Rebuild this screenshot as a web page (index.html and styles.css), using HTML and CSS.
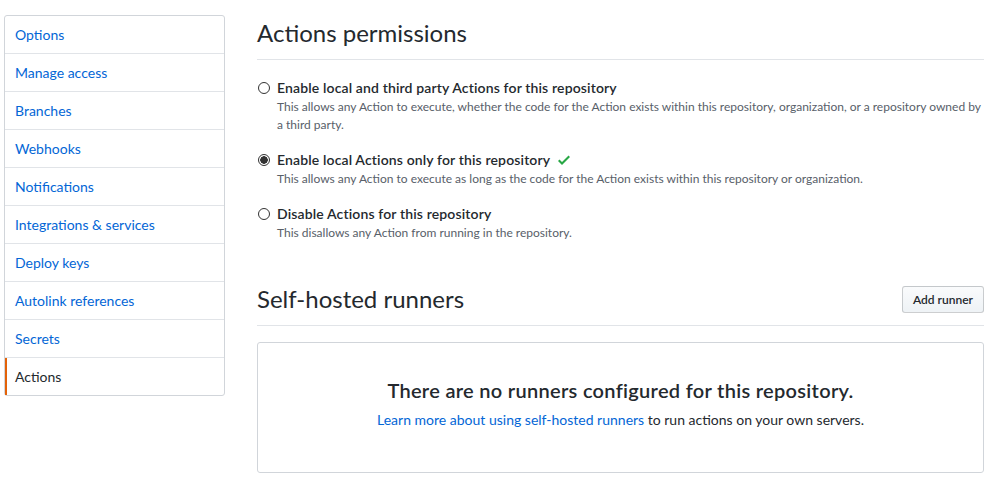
FILE: index.html
```html
<!DOCTYPE html>
<html lang="en">
<head>
  <meta charset="UTF-8">
  <title>Actions settings</title>
  <link rel="stylesheet" href="styles.css">
</head>
<body>
  <div class="layout">
    <nav class="menu">
      <a class="menu-item" href="#">Options</a>
      <a class="menu-item" href="#">Manage access</a>
      <a class="menu-item" href="#">Branches</a>
      <a class="menu-item" href="#">Webhooks</a>
      <a class="menu-item" href="#">Notifications</a>
      <a class="menu-item" href="#">Integrations &amp; services</a>
      <a class="menu-item" href="#">Deploy keys</a>
      <a class="menu-item" href="#">Autolink references</a>
      <a class="menu-item" href="#">Secrets</a>
      <a class="menu-item selected" href="#">Actions</a>
    </nav>

    <main class="content">
      <div class="subhead">
        <h2 class="subhead-heading">Actions permissions</h2>
      </div>

      <form class="permissions">
        <div class="form-checkbox">
          <label>
            <input type="radio" name="perm">
            Enable local and third party Actions for this repository
          </label>
          <p class="note">This allows any Action to execute, whether the code for the Action exists within this repository, organization, or a repository owned by a third party.</p>
        </div>
        <div class="form-checkbox">
          <label>
            <input type="radio" name="perm" checked>
            Enable local Actions only for this repository
            <svg class="check" width="12" height="16" viewBox="0 0 12 16"><path fill-rule="evenodd" d="M12 5l-8 8-4-4 1.5-1.5L4 10l6.5-6.5L12 5z"></path></svg>
          </label>
          <p class="note">This allows any Action to execute as long as the code for the Action exists within this repository or organization.</p>
        </div>
        <div class="form-checkbox">
          <label>
            <input type="radio" name="perm">
            Disable Actions for this repository
          </label>
          <p class="note">This disallows any Action from running in the repository.</p>
        </div>
      </form>

      <div class="subhead spacious">
        <h2 class="subhead-heading">Self-hosted runners</h2>
        <button class="btn" type="button">Add runner</button>
      </div>

      <div class="blankslate">
        <h3>There are no runners configured for this repository.</h3>
        <p><a href="#">Learn more about using self-hosted runners</a> to run actions on your own servers.</p>
      </div>
    </main>
  </div>
</body>
</html>
```

FILE: styles.css
```css
body {
  margin: 0;
  font-family: Lato, "Noto Sans", Arial, sans-serif;
  font-size: 14px;
  line-height: 1.5;
  color: #24292e;
  background-color: #fff;
}
a {
  color: #0366d6;
  text-decoration: none;
}
.layout {
  display: flex;
  gap: 32px;
  padding: 15px 21px 0 4px;
}
.menu {
  flex: 0 0 221px;
  align-self: flex-start;
  display: flex;
  flex-direction: column;
  border: 1px solid #d1d5da;
  border-radius: 3px;
  box-sizing: border-box;
}
.menu-item {
  padding: 8px 10px;
  border-bottom: 1px solid #e1e4e8;
}
.menu-item:last-child {
  border-bottom: 0;
}
.menu-item.selected {
  color: #24292e;
  padding-left: 8px;
  border-left: 2px solid #e36209;
}
.content {
  flex: 1;
}
.subhead {
  display: flex;
  align-items: flex-start;
  padding-bottom: 8px;
  margin-bottom: 16px;
  border-bottom: 1px solid #e1e4e8;
}
.subhead.spacious {
  margin-top: 39px;
}
.subhead-heading {
  flex: 1;
  margin: 0;
  font-size: 24px;
  font-weight: 400;
  line-height: 36px;
}
.btn {
  margin-top: 5px;
  padding: 3px 10px;
  font-family: inherit;
  font-size: 12px;
  font-weight: 600;
  line-height: 19px;
  color: #24292e;
  background-color: #eff3f6;
  background-image: linear-gradient(-180deg, #fafbfc, #eff3f6 90%);
  border: 1px solid rgba(27, 31, 35, 0.2);
  border-radius: 3px;
}
.permissions {
  display: flex;
  flex-direction: column;
  gap: 15px;
  padding-top: 1px;
}
.form-checkbox {
  padding-left: 20px;
}
.form-checkbox label {
  display: flex;
  align-items: center;
  font-weight: 600;
  line-height: 21px;
  letter-spacing: 0.14px;
}
.form-checkbox input {
  appearance: none;
  width: 12px;
  height: 12px;
  margin: 0 7px 0 -19px;
  border: 1px solid #333;
  border-radius: 50%;
  background: #fff;
}
.form-checkbox input:checked {
  background: radial-gradient(circle, #333 3.5px, #fff 4px);
}
.check {
  margin-left: 8px;
  fill: #28a745;
}
.note {
  margin: 0;
  font-size: 12px;
  line-height: 18px;
  color: #586069;
}
.blankslate {
  padding: 32px 32px 42px;
  text-align: center;
  border: 1px solid #d1d5da;
  border-radius: 3px;
}
.blankslate h3 {
  margin: 0 0 4px;
  font-size: 20px;
  font-weight: 600;
  line-height: 30px;
  letter-spacing: 0.3px;
}
.blankslate p {
  margin: 0;
}
```
